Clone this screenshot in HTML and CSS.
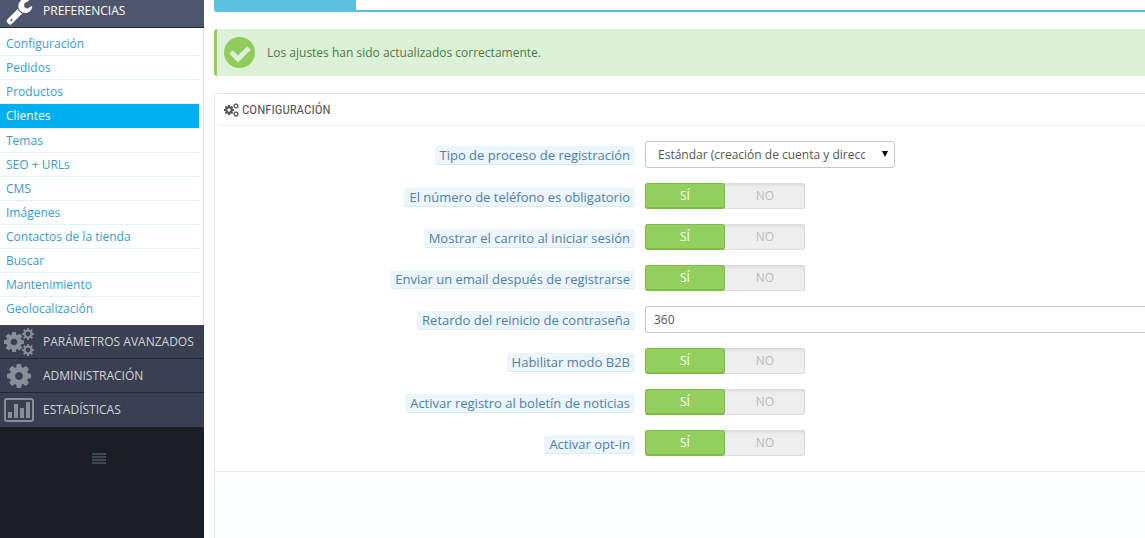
FILE: index.html
```html
<!DOCTYPE html>
<html lang="es">

<head>
    <meta charset="utf-8">
    <title>Clientes</title>
    <link rel="stylesheet" href="styles.css">
</head>

<body>

    <svg class="defs">
        <symbol id="cog" viewBox="0 128 1536 1536">
            <path d="M1024 896q0-106-75-181t-181-75-181 75-75 181 75 181 181 75 181-75 75-181zm512-109v222q0 12-8 23t-20 13l-185 28q-19 54-39 91 35 50 107 138 10 12 10 25t-9 23q-27 37-99 108t-94 71q-12 0-26-9l-138-108q-44 23-91 38-16 136-29 186-7 28-36 28h-222q-14 0-24.500-8.500t-11.500-21.500l-28-184q-49-16-90-37l-141 107q-10 9-25 9-14 0-25-11-126-114-165-168-7-10-7-23 0-12 8-23 15-21 51-66.500t54-70.500q-27-50-41-99l-183-27q-13-2-21-12.500t-8-23.500v-222q0-12 8-23t19-13l186-28q14-46 39-92-40-57-107-138-10-12-10-24 0-10 9-23 26-36 98.500-107.500t94.500-71.500q13 0 26 10l138 107q44-23 91-38 16-136 29-186 7-28 36-28h222q14 0 24.500 8.500t11.500 21.500l28 184q49 16 90 37l142-107q9-9 24-9 13 0 25 10 129 119 165 170 7 8 7 22 0 12-8 23-15 21-51 66.500t-54 70.500q26 50 41 98l183 28q13 2 21 12.500t8 23.500z"/>
        </symbol>
        <symbol id="cog-small" viewBox="0 0 12 12">
            <g fill="none" stroke="currentColor">
                <circle cx="6" cy="6" r="3.500" stroke-width="2.200"/>
                <circle cx="6" cy="6" r="5" stroke-width="2" pathLength="16" stroke-dasharray="1 1" stroke-dashoffset="0.500"/>
            </g>
        </symbol>
        <symbol id="cogs" viewBox="0 0 30 28">
            <use href="#cog" x="0" y="4" width="20" height="20"/>
            <use href="#cog-small" x="18" y="0" width="12" height="12"/>
            <use href="#cog-small" x="18" y="16" width="12" height="12"/>
        </symbol>
    </svg>

    <nav id="sidebar">
        <ul class="menu">
            <li class="menu-item open">
                <a href="#">
                    <svg class="icon" viewBox="-80 0 1792 1792"><path d="M384 1472q0-26-19-45t-45-19-45 19-19 45 19 45 45 19 45-19 19-45zm644-420l-682 682q-37 37-90 37-52 0-91-37l-106-108q-38-36-38-90 0-53 38-91l681-681q39 98 114.500 173.500t173.500 114.500zm634-435q0 39-23 106-47 134-164.500 217.500t-258.500 83.500q-185 0-316.500-131.500t-131.500-316.500 131.500-316.500 316.500-131.500q58 0 121.500 16.500t107.500 46.500q16 11 16 28t-16 28l-293 169v224l193 107q5-3 79-48.500t135.500-81 70.500-35.500q15 0 23.500 10t8.500 25z"/></svg>
                    PREFERENCIAS
                </a>
            </li>
        </ul>
        <ul class="submenu">
            <li><a href="#">Configuración</a></li>
            <li><a href="#">Pedidos</a></li>
            <li><a href="#">Productos</a></li>
            <li class="active"><a href="#">Clientes</a></li>
            <li><a href="#">Temas</a></li>
            <li><a href="#">SEO + URLs</a></li>
            <li><a href="#">CMS</a></li>
            <li><a href="#">Imágenes</a></li>
            <li><a href="#">Contactos de la tienda</a></li>
            <li><a href="#">Buscar</a></li>
            <li><a href="#">Mantenimiento</a></li>
            <li><a href="#">Geolocalización</a></li>
        </ul>
        <ul class="menu">
            <li class="menu-item">
                <a href="#"><svg class="icon"><use href="#cogs"/></svg>PARÁMETROS AVANZADOS</a>
            </li>
            <li class="menu-item">
                <a href="#"><svg class="icon small"><use href="#cog"/></svg>ADMINISTRACIÓN</a>
            </li>
            <li class="menu-item">
                <a href="#">
                    <svg class="icon" viewBox="0 0 30 28">
                        <rect x="1" y="3" width="28" height="22" rx="2" fill="none" stroke="currentColor" stroke-width="2"/>
                        <path d="M4 16h4v6h-4zM10 8h4v14h-4zM16 12h4v10h-4zM22 6h4v16h-4z"/>
                    </svg>
                    ESTADÍSTICAS
                </a>
            </li>
        </ul>
        <button type="button" class="collapse" aria-label="Contraer menú">
            <svg viewBox="0 0 14 11"><path d="M0 0h14v2H0zM0 3h14v2H0zM0 6h14v2H0zM0 9h14v2H0z"/></svg>
        </button>
    </nav>

    <main id="content">
        <div class="tabs"><div class="tab"></div></div>

        <div class="alert">
            <svg viewBox="0 0 31 31">
                <circle cx="15.500" cy="15.500" r="15.500"/>
                <path d="M7 15l7 7 11-11" fill="none" stroke="#ddf0d8" stroke-width="5"/>
            </svg>
            Los ajustes han sido actualizados correctamente.
        </div>

        <form class="panel">
            <h3><svg><use href="#cogs"/></svg>CONFIGURACIÓN</h3>

            <div class="rows">
                <div class="row">
                    <label class="name" for="process">Tipo de proceso de registración</label>
                    <div class="select">
                        <select id="process">
                            <option>Estándar (creación de cuenta y direcciones)</option>
                            <option>Sólo creación de cuenta</option>
                        </select>
                    </div>
                </div>
                <div class="row" role="radiogroup" aria-labelledby="phone">
                    <span class="name" id="phone">El número de teléfono es obligatorio</span>
                    <div class="switch">
                        <input type="radio" name="phone" id="phone_on" checked><label for="phone_on">SÍ</label>
                        <input type="radio" name="phone" id="phone_off"><label for="phone_off">NO</label>
                    </div>
                </div>
                <div class="row" role="radiogroup" aria-labelledby="cart">
                    <span class="name" id="cart">Mostrar el carrito al iniciar sesión</span>
                    <div class="switch">
                        <input type="radio" name="cart" id="cart_on" checked><label for="cart_on">SÍ</label>
                        <input type="radio" name="cart" id="cart_off"><label for="cart_off">NO</label>
                    </div>
                </div>
                <div class="row" role="radiogroup" aria-labelledby="email">
                    <span class="name" id="email">Enviar un email después de registrarse</span>
                    <div class="switch">
                        <input type="radio" name="email" id="email_on" checked><label for="email_on">SÍ</label>
                        <input type="radio" name="email" id="email_off"><label for="email_off">NO</label>
                    </div>
                </div>
                <div class="row">
                    <label class="name" for="delay">Retardo del reinicio de contraseña</label>
                    <input type="text" class="text" id="delay" value="360">
                </div>
                <div class="row" role="radiogroup" aria-labelledby="b2b">
                    <span class="name" id="b2b">Habilitar modo B2B</span>
                    <div class="switch">
                        <input type="radio" name="b2b" id="b2b_on" checked><label for="b2b_on">SÍ</label>
                        <input type="radio" name="b2b" id="b2b_off"><label for="b2b_off">NO</label>
                    </div>
                </div>
                <div class="row" role="radiogroup" aria-labelledby="news">
                    <span class="name" id="news">Activar registro al boletín de noticias</span>
                    <div class="switch">
                        <input type="radio" name="news" id="news_on" checked><label for="news_on">SÍ</label>
                        <input type="radio" name="news" id="news_off"><label for="news_off">NO</label>
                    </div>
                </div>
                <div class="row" role="radiogroup" aria-labelledby="optin">
                    <span class="name" id="optin">Activar opt-in</span>
                    <div class="switch">
                        <input type="radio" name="optin" id="optin_on" checked><label for="optin_on">SÍ</label>
                        <input type="radio" name="optin" id="optin_off"><label for="optin_off">NO</label>
                    </div>
                </div>
            </div>

            <div class="panel-footer"></div>
        </form>
    </main>

</body>

</html>
```

FILE: styles.css
```css
* {
    box-sizing: border-box;
}

body {
    margin: 0;
    display: flex;
    min-height: 100vh;
    background: #fff;
    color: #555;
    font-family: "Open Sans", "Liberation Sans", sans-serif;
    font-size: 12px;
}

ul {
    margin: 0;
    padding: 0;
    list-style: none;
}

a {
    text-decoration: none;
}

svg {
    fill: currentColor;
    flex: none;
}

.defs {
    position: absolute;
    width: 0;
    height: 0;
}

/* sidebar */
#sidebar {
    width: 204px;
    flex: none;
    background: #1b1e25;
}

.menu-item {
    display: flex;
    align-items: flex-end;
    height: 34px;
    border-bottom: 1px solid #22262f;
    background: #3a4051;
    overflow: hidden;
}

.menu-item:last-child {
    border-bottom-color: #3a4051;
}

.menu-item a {
    display: flex;
    align-items: center;
    gap: 9px;
    height: 33px;
    flex: none;
    padding-left: 4px;
    color: #d0d2d8;
}

.menu-item .icon {
    width: 30px;
    height: 28px;
    color: #8a8e99;
}

.menu-item .small {
    height: 24px;
}

.menu-item.open {
    height: 28px;
    background: #4d566d;
    border-bottom-color: #22262f;
}

.menu-item.open a,
.menu-item.open .icon {
    color: #fff;
}

.submenu {
    padding: 4px 4px 4px 0;
    background: #fff;
    border-right: 1px solid #e0e0e0;
}

.submenu li {
    height: 24px;
    border-bottom: 1px solid #dff0f8;
}

.submenu li:last-child {
    border-bottom: 0;
}

.submenu a {
    display: block;
    padding-left: 6px;
    line-height: 24px;
    color: #3a9bd5;
}

.submenu .active {
    margin-bottom: 1px;
    border-bottom: 0;
    background: #00aff0;
}

.submenu .active a {
    color: #fff;
}

.collapse {
    display: block;
    margin: 26px auto 0 92px;
    padding: 0;
    border: 0;
    background: none;
    color: #3f4657;
}

.collapse svg {
    display: block;
    width: 14px;
    height: 11px;
}

/* content */
#content {
    flex: 1;
    min-width: 0;
    display: flex;
    flex-direction: column;
    padding-left: 10px;
}

.tabs {
    height: 12px;
    border-bottom: 2px solid #5bc0de;
    border-bottom-left-radius: 3px;
}

.tab {
    width: 142px;
    height: 10px;
    background: #5bc0de;
}

.alert {
    display: flex;
    align-items: center;
    gap: 12px;
    height: 47px;
    margin: 17px 0;
    padding-left: 7px;
    border-left: 3px solid #92cf5f;
    border-radius: 3px 0 0 3px;
    background: #ddf0d8;
    color: #4b7a4b;
}

.alert svg {
    width: 31px;
    height: 31px;
    color: #8fcc5c;
}

.panel {
    flex: 1;
    display: flex;
    flex-direction: column;
    border: 1px solid #e6e6e6;
    border-width: 1px 0 0 1px;
    border-top-left-radius: 5px;
}

.panel h3 {
    display: flex;
    align-items: center;
    gap: 3px;
    height: 32px;
    margin: 0 0 15px 4px;
    padding-left: 5px;
    border-bottom: 1px solid #eee;
    font-family: "Ubuntu Condensed", "Roboto Condensed", Roboto, sans-serif;
    font-size: 13px;
    font-weight: 400;
}

.panel h3 svg {
    width: 15px;
    height: 14px;
}

.rows {
    display: flex;
    flex-direction: column;
    gap: 15px;
    padding-bottom: 15px;
}

.row {
    display: grid;
    grid-template-columns: 420px 1fr;
    column-gap: 10px;
    align-items: start;
}

.name {
    justify-self: end;
    margin-top: 5px;
    padding: 0 5px;
    border-bottom: 1px solid #d8eaf5;
    border-radius: 3px;
    background: #ebf5fb;
    color: #4f81a8;
    font-size: 13px;
    line-height: 18px;
}

.select {
    position: relative;
    width: 250px;
}

.select::after {
    content: "";
    position: absolute;
    top: 10px;
    right: 7px;
    border: solid transparent;
    border-width: 6px 3px 0;
    border-top-color: #000;
    pointer-events: none;
}

select,
.text {
    display: block;
    width: 100%;
    height: 27px;
    border: 1px solid #c7c7c7;
    border-radius: 3px;
    background: #fff;
    color: #555;
    font: inherit;
}

select {
    appearance: none;
    padding: 0 29px 0 12px;
}

.text {
    padding: 0 8px;
    border-right: 0;
    border-radius: 3px 0 0 3px;
}

.switch {
    position: relative;
    display: flex;
    width: 160px;
    height: 26px;
    border-radius: 3px;
    background: #eee;
    box-shadow: inset 0 0 0 1px #dcdcdc, inset 0 2px 3px #d8d8d8;
}

.switch input {
    position: absolute;
    margin: 0;
    opacity: 0;
}

.switch label {
    flex: 1;
    border: 1px solid transparent;
    border-radius: 3px;
    color: #bbb;
    line-height: 23px;
    text-align: center;
    cursor: pointer;
}

.switch input:checked + label {
    border-color: #7dbd45;
    border-bottom-width: 2px;
    background: #92cf5f;
    color: #fff;
}

.panel-footer {
    flex: 1;
    border-top: 1px solid #e8eaec;
    background: #fcfdff;
}
```
